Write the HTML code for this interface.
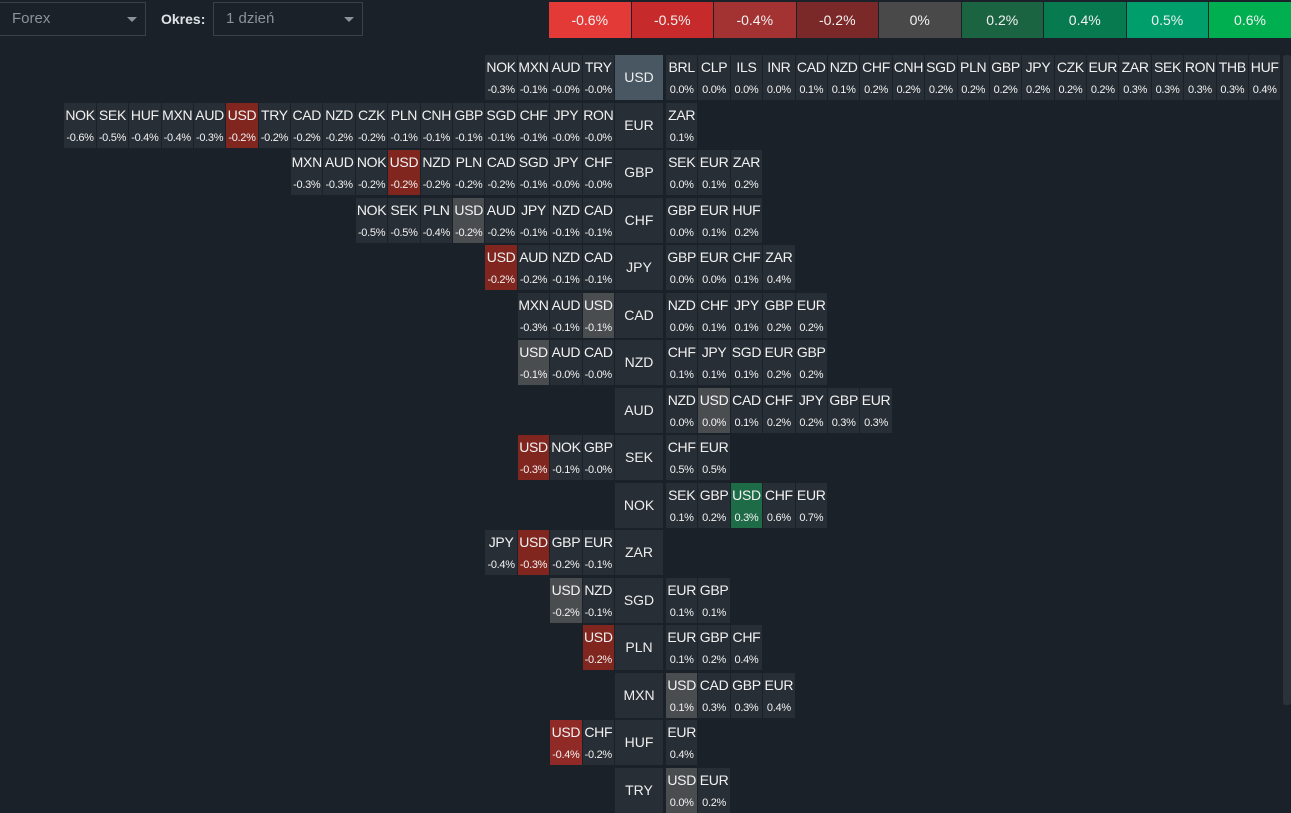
<!DOCTYPE html><html><head><meta charset="utf-8"><style>
body{margin:0;width:1291px;height:812px;background:#1a2128;font-family:"Liberation Sans",sans-serif;overflow:hidden;position:relative;color:#fff}
.sel{position:absolute;top:2px;height:34px;border:1px solid #38424b;box-sizing:border-box;color:#8a939b;font-size:15px;line-height:32px;padding-left:12px}
.sel:after{content:"";position:absolute;right:8px;top:14px;border:5px solid transparent;border-top:5px solid #8a939b}
.lab{position:absolute;left:161px;top:11px;font-size:14px;color:#dfe3e6;font-weight:bold}
.leg{position:absolute;top:2px;height:36px;width:81.5px;font-size:14px;line-height:36px;text-align:center;color:#f2f2f2}
.row{position:absolute;height:45px;left:0;width:1291px}
.L{position:absolute;right:677px;top:0;display:flex;gap:1px}
.R{position:absolute;left:666px;top:0;display:flex;gap:1px}
.c{width:31.4px;height:45px;background:#272e35;text-align:center;box-sizing:border-box;padding-top:4px;white-space:nowrap}
.c b{display:block;font-weight:normal;font-size:14px;line-height:17px;color:#f2f2f2;letter-spacing:-0.3px}
.c i{display:block;font-style:normal;font-size:11px;line-height:14px;margin-top:7px;color:#f2f2f2;letter-spacing:-0.3px}
.ctr{position:absolute;left:615px;width:48px;height:45px;background:#272e35;font-size:14px;line-height:45px;text-align:center;color:#eee}
.r{background:#80261f}.g{background:#4a4d50}.gr{background:#1e6b48}
.sb{position:absolute;left:1283px;top:55px;width:8px;height:650px;background:#2b3238;border-radius:3px}
</style></head><body>
<div class="sel" style="left:-1px;width:147px">Forex</div>
<div class="lab">Okres:</div>
<div class="sel" style="left:213px;width:150px">1 dzień</div>
<div class="leg" style="left:549px;background:#e43a37">-0.6%</div>
<div class="leg" style="left:631.5px;background:#c62a2a">-0.5%</div>
<div class="leg" style="left:714px;background:#a33232">-0.4%</div>
<div class="leg" style="left:796.5px;background:#7b2828">-0.2%</div>
<div class="leg" style="left:879px;background:#494949">0%</div>
<div class="leg" style="left:961.5px;background:#1a6442">0.2%</div>
<div class="leg" style="left:1044px;background:#087a4f">0.4%</div>
<div class="leg" style="left:1126.5px;background:#009e6b">0.5%</div>
<div class="leg" style="left:1209px;background:#00b050;width:82px">0.6%</div>
<div class="sb"></div>

<div class="row" style="top:55px"><div class="L"><div class="c"><b>NOK</b><i>-0.3%</i></div><div class="c"><b>MXN</b><i>-0.1%</i></div><div class="c"><b>AUD</b><i>-0.0%</i></div><div class="c"><b>TRY</b><i>-0.0%</i></div></div><div class="ctr" style="background:#485762">USD</div><div class="R"><div class="c"><b>BRL</b><i>0.0%</i></div><div class="c"><b>CLP</b><i>0.0%</i></div><div class="c"><b>ILS</b><i>0.0%</i></div><div class="c"><b>INR</b><i>0.0%</i></div><div class="c"><b>CAD</b><i>0.1%</i></div><div class="c"><b>NZD</b><i>0.1%</i></div><div class="c"><b>CHF</b><i>0.2%</i></div><div class="c"><b>CNH</b><i>0.2%</i></div><div class="c"><b>SGD</b><i>0.2%</i></div><div class="c"><b>PLN</b><i>0.2%</i></div><div class="c"><b>GBP</b><i>0.2%</i></div><div class="c"><b>JPY</b><i>0.2%</i></div><div class="c"><b>CZK</b><i>0.2%</i></div><div class="c"><b>EUR</b><i>0.2%</i></div><div class="c"><b>ZAR</b><i>0.3%</i></div><div class="c"><b>SEK</b><i>0.3%</i></div><div class="c"><b>RON</b><i>0.3%</i></div><div class="c"><b>THB</b><i>0.3%</i></div><div class="c"><b>HUF</b><i>0.4%</i></div></div></div>

<div class="row" style="top:103px"><div class="L"><div class="c"><b>NOK</b><i>-0.6%</i></div><div class="c"><b>SEK</b><i>-0.5%</i></div><div class="c"><b>HUF</b><i>-0.4%</i></div><div class="c"><b>MXN</b><i>-0.4%</i></div><div class="c"><b>AUD</b><i>-0.3%</i></div><div class="c r"><b>USD</b><i>-0.2%</i></div><div class="c"><b>TRY</b><i>-0.2%</i></div><div class="c"><b>CAD</b><i>-0.2%</i></div><div class="c"><b>NZD</b><i>-0.2%</i></div><div class="c"><b>CZK</b><i>-0.2%</i></div><div class="c"><b>PLN</b><i>-0.1%</i></div><div class="c"><b>CNH</b><i>-0.1%</i></div><div class="c"><b>GBP</b><i>-0.1%</i></div><div class="c"><b>SGD</b><i>-0.1%</i></div><div class="c"><b>CHF</b><i>-0.1%</i></div><div class="c"><b>JPY</b><i>-0.0%</i></div><div class="c"><b>RON</b><i>-0.0%</i></div></div><div class="ctr">EUR</div><div class="R"><div class="c"><b>ZAR</b><i>0.1%</i></div></div></div>

<div class="row" style="top:150px"><div class="L"><div class="c"><b>MXN</b><i>-0.3%</i></div><div class="c"><b>AUD</b><i>-0.3%</i></div><div class="c"><b>NOK</b><i>-0.2%</i></div><div class="c r"><b>USD</b><i>-0.2%</i></div><div class="c"><b>NZD</b><i>-0.2%</i></div><div class="c"><b>PLN</b><i>-0.2%</i></div><div class="c"><b>CAD</b><i>-0.2%</i></div><div class="c"><b>SGD</b><i>-0.1%</i></div><div class="c"><b>JPY</b><i>-0.0%</i></div><div class="c"><b>CHF</b><i>-0.0%</i></div></div><div class="ctr">GBP</div><div class="R"><div class="c"><b>SEK</b><i>0.0%</i></div><div class="c"><b>EUR</b><i>0.1%</i></div><div class="c"><b>ZAR</b><i>0.2%</i></div></div></div>

<div class="row" style="top:198px"><div class="L"><div class="c"><b>NOK</b><i>-0.5%</i></div><div class="c"><b>SEK</b><i>-0.5%</i></div><div class="c"><b>PLN</b><i>-0.4%</i></div><div class="c g"><b>USD</b><i>-0.2%</i></div><div class="c"><b>AUD</b><i>-0.2%</i></div><div class="c"><b>JPY</b><i>-0.1%</i></div><div class="c"><b>NZD</b><i>-0.1%</i></div><div class="c"><b>CAD</b><i>-0.1%</i></div></div><div class="ctr">CHF</div><div class="R"><div class="c"><b>GBP</b><i>0.0%</i></div><div class="c"><b>EUR</b><i>0.1%</i></div><div class="c"><b>HUF</b><i>0.2%</i></div></div></div>

<div class="row" style="top:245px"><div class="L"><div class="c r"><b>USD</b><i>-0.2%</i></div><div class="c"><b>AUD</b><i>-0.2%</i></div><div class="c"><b>NZD</b><i>-0.1%</i></div><div class="c"><b>CAD</b><i>-0.1%</i></div></div><div class="ctr">JPY</div><div class="R"><div class="c"><b>GBP</b><i>0.0%</i></div><div class="c"><b>EUR</b><i>0.0%</i></div><div class="c"><b>CHF</b><i>0.1%</i></div><div class="c"><b>ZAR</b><i>0.4%</i></div></div></div>

<div class="row" style="top:293px"><div class="L"><div class="c"><b>MXN</b><i>-0.3%</i></div><div class="c"><b>AUD</b><i>-0.1%</i></div><div class="c g"><b>USD</b><i>-0.1%</i></div></div><div class="ctr">CAD</div><div class="R"><div class="c"><b>NZD</b><i>0.0%</i></div><div class="c"><b>CHF</b><i>0.1%</i></div><div class="c"><b>JPY</b><i>0.1%</i></div><div class="c"><b>GBP</b><i>0.2%</i></div><div class="c"><b>EUR</b><i>0.2%</i></div></div></div>

<div class="row" style="top:340px"><div class="L"><div class="c g"><b>USD</b><i>-0.1%</i></div><div class="c"><b>AUD</b><i>-0.0%</i></div><div class="c"><b>CAD</b><i>-0.0%</i></div></div><div class="ctr">NZD</div><div class="R"><div class="c"><b>CHF</b><i>0.1%</i></div><div class="c"><b>JPY</b><i>0.1%</i></div><div class="c"><b>SGD</b><i>0.1%</i></div><div class="c"><b>EUR</b><i>0.2%</i></div><div class="c"><b>GBP</b><i>0.2%</i></div></div></div>

<div class="row" style="top:388px"><div class="ctr">AUD</div><div class="R"><div class="c"><b>NZD</b><i>0.0%</i></div><div class="c g"><b>USD</b><i>0.0%</i></div><div class="c"><b>CAD</b><i>0.1%</i></div><div class="c"><b>CHF</b><i>0.2%</i></div><div class="c"><b>JPY</b><i>0.2%</i></div><div class="c"><b>GBP</b><i>0.3%</i></div><div class="c"><b>EUR</b><i>0.3%</i></div></div></div>

<div class="row" style="top:435px"><div class="L"><div class="c r"><b>USD</b><i>-0.3%</i></div><div class="c"><b>NOK</b><i>-0.1%</i></div><div class="c"><b>GBP</b><i>-0.0%</i></div></div><div class="ctr">SEK</div><div class="R"><div class="c"><b>CHF</b><i>0.5%</i></div><div class="c"><b>EUR</b><i>0.5%</i></div></div></div>

<div class="row" style="top:483px"><div class="ctr">NOK</div><div class="R"><div class="c"><b>SEK</b><i>0.1%</i></div><div class="c"><b>GBP</b><i>0.2%</i></div><div class="c gr"><b>USD</b><i>0.3%</i></div><div class="c"><b>CHF</b><i>0.6%</i></div><div class="c"><b>EUR</b><i>0.7%</i></div></div></div>

<div class="row" style="top:530px"><div class="L"><div class="c"><b>JPY</b><i>-0.4%</i></div><div class="c r"><b>USD</b><i>-0.3%</i></div><div class="c"><b>GBP</b><i>-0.2%</i></div><div class="c"><b>EUR</b><i>-0.1%</i></div></div><div class="ctr">ZAR</div></div>

<div class="row" style="top:578px"><div class="L"><div class="c g"><b>USD</b><i>-0.2%</i></div><div class="c"><b>NZD</b><i>-0.1%</i></div></div><div class="ctr">SGD</div><div class="R"><div class="c"><b>EUR</b><i>0.1%</i></div><div class="c"><b>GBP</b><i>0.1%</i></div></div></div>

<div class="row" style="top:625px"><div class="L"><div class="c r"><b>USD</b><i>-0.2%</i></div></div><div class="ctr">PLN</div><div class="R"><div class="c"><b>EUR</b><i>0.1%</i></div><div class="c"><b>GBP</b><i>0.2%</i></div><div class="c"><b>CHF</b><i>0.4%</i></div></div></div>

<div class="row" style="top:673px"><div class="ctr">MXN</div><div class="R"><div class="c g"><b>USD</b><i>0.1%</i></div><div class="c"><b>CAD</b><i>0.3%</i></div><div class="c"><b>GBP</b><i>0.3%</i></div><div class="c"><b>EUR</b><i>0.4%</i></div></div></div>

<div class="row" style="top:720px"><div class="L"><div class="c r" style="background:#902a26"><b>USD</b><i>-0.4%</i></div><div class="c"><b>CHF</b><i>-0.2%</i></div></div><div class="ctr">HUF</div><div class="R"><div class="c"><b>EUR</b><i>0.4%</i></div></div></div>

<div class="row" style="top:768px"><div class="ctr">TRY</div><div class="R"><div class="c g"><b>USD</b><i>0.0%</i></div><div class="c"><b>EUR</b><i>0.2%</i></div></div></div>
</body></html>
